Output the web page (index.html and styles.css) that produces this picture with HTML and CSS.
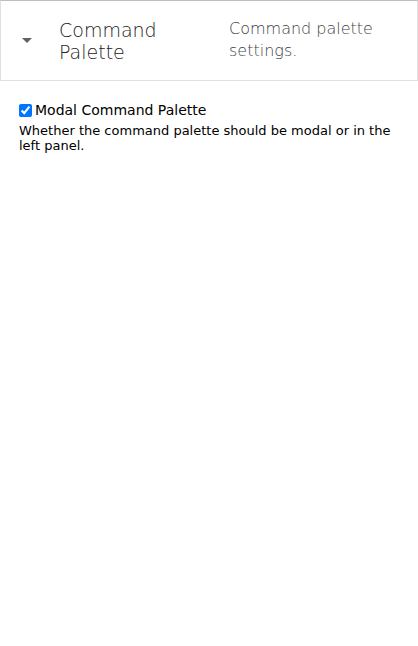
FILE: index.html
```html
<!DOCTYPE html>
<html>
<head>
<meta charset="utf-8">
<link rel="stylesheet" href="styles.css">
</head>
<body>
<div class="header">
  <div class="caret"><svg width="12" height="6" viewBox="0 0 12 6"><path d="M1 0 L11 0 L6 5 Z" fill="#616161"/></svg></div>
  <div class="title"><span class="t1">Command Palette</span></div>
  <div class="desc">Command palette settings.</div>
</div>
<div class="field">
  <label class="check"><input type="checkbox" checked><span>Modal Command Palette</span></label>
  <div class="help">Whether the command palette should be modal or in the left panel.</div>
</div>
</body>
</html>
```
FILE: styles.css
```css
body {
  margin: 0;
  font-family: "DejaVu Sans", sans-serif;
  background: #fff;
  color: #000;
}
.header {
  display: flex;
  align-items: center;
  height: 79px;
  border: 1px solid #e0e0e0;
  border-top-color: #bdbdbd;
}
.caret {
  width: 58px;
  padding-left: 20px;
  box-sizing: border-box;
  display: flex;
  align-items: center;
}
.caret svg { display: block; }
.title {
  width: 170px;
  padding-right: 20px;
  box-sizing: border-box;
  font-size: 19px;
  font-weight: 200;
  line-height: 22px;
  color: #212121;
}
.desc {
  flex: 1;
  padding-right: 20px;
  margin-top: -2px;
  font-size: 16px;
  font-weight: 200;
  line-height: 22px;
  color: #424242;
}
.field {
  padding: 21px 19px;
}
.check {
  display: flex;
  align-items: center;
  font-size: 14px;
  line-height: 17px;
}
.check input {
  margin: 0 3px 0 0;
  width: 13px;
  height: 13px;
}
.help {
  font-size: 13px;
  line-height: 15px;
  margin-top: 4px;
}
```
